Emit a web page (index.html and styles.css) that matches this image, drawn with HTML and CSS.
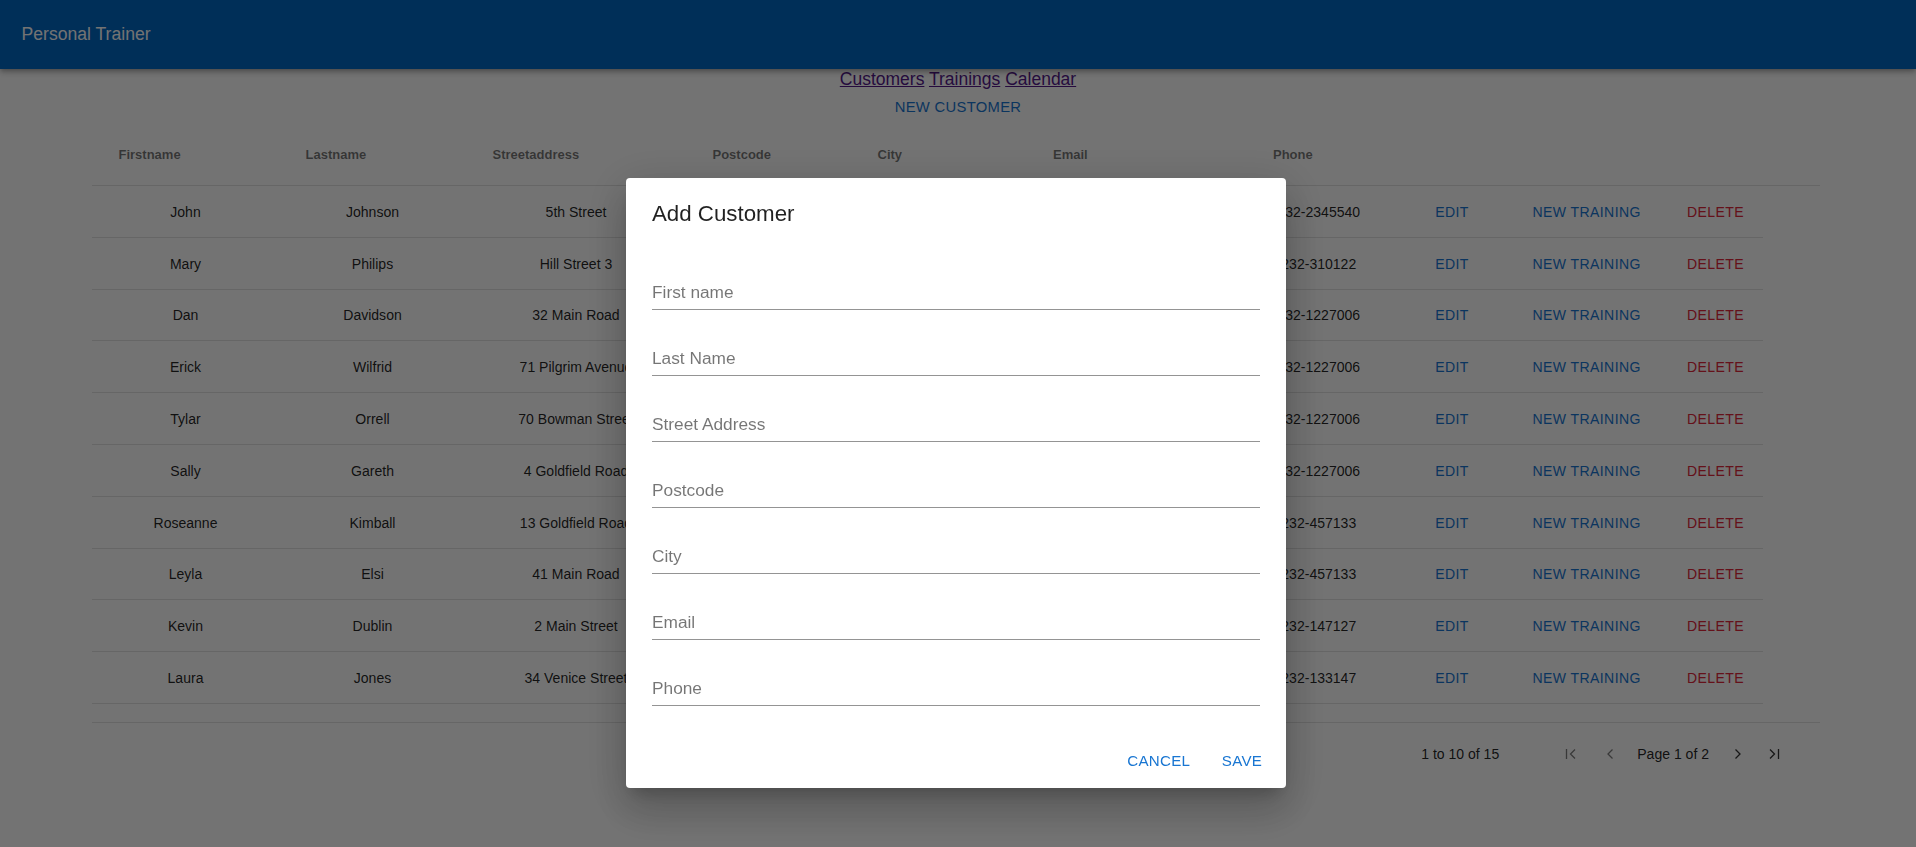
FILE: index.html
```html
<!DOCTYPE html>
<html lang="en">
<head>
<meta charset="utf-8">
<title>Personal Trainer</title>
<link rel="stylesheet" href="styles.css">
</head>
<body>
<header class="appbar">
  <div class="toolbar"><span class="brand">Personal Trainer</span></div>
</header>
<main class="main">
  <nav class="nav"><a class="link" href="#">Customers</a> <a class="link" href="#">Trainings</a> <a class="link" href="#">Calendar</a></nav>
  <div class="top-actions"><button class="btn btn-top">New Customer</button></div>
  <section class="grid">
    <div class="grid-header">
      <div class="hcell">Firstname</div>
      <div class="hcell">Lastname</div>
      <div class="hcell">Streetaddress</div>
      <div class="hcell">Postcode</div>
      <div class="hcell">City</div>
      <div class="hcell">Email</div>
      <div class="hcell">Phone</div>
      <div class="hcell"></div>
      <div class="hcell"></div>
      <div class="hcell"></div>
    </div>
    <div class="grid-body">
      <div class="row"><div class="cell">John</div><div class="cell">Johnson</div><div class="cell">5th Street</div><div class="cell">23110</div><div class="cell">Flintsone</div><div class="cell">john@mail.com</div><div class="cell">232-2345540</div><div class="acell"><button class="btn btn-sm btn-blue">Edit</button></div><div class="acell"><button class="btn btn-sm btn-blue">New Training</button></div><div class="acell"><button class="btn btn-sm btn-red">Delete</button></div></div>
      <div class="row"><div class="cell">Mary</div><div class="cell">Philips</div><div class="cell">Hill Street 3</div><div class="cell">23120</div><div class="cell">Flintsone</div><div class="cell">m.philips@mail.com</div><div class="cell">232-310122</div><div class="acell"><button class="btn btn-sm btn-blue">Edit</button></div><div class="acell"><button class="btn btn-sm btn-blue">New Training</button></div><div class="acell"><button class="btn btn-sm btn-red">Delete</button></div></div>
      <div class="row"><div class="cell">Dan</div><div class="cell">Davidson</div><div class="cell">32 Main Road</div><div class="cell">23122</div><div class="cell">Springfield</div><div class="cell">dan@mymail.com</div><div class="cell">232-1227006</div><div class="acell"><button class="btn btn-sm btn-blue">Edit</button></div><div class="acell"><button class="btn btn-sm btn-blue">New Training</button></div><div class="acell"><button class="btn btn-sm btn-red">Delete</button></div></div>
      <div class="row"><div class="cell">Erick</div><div class="cell">Wilfrid</div><div class="cell">71 Pilgrim Avenue</div><div class="cell">23110</div><div class="cell">Chevy Chase</div><div class="cell">erick@mail.com</div><div class="cell">232-1227006</div><div class="acell"><button class="btn btn-sm btn-blue">Edit</button></div><div class="acell"><button class="btn btn-sm btn-blue">New Training</button></div><div class="acell"><button class="btn btn-sm btn-red">Delete</button></div></div>
      <div class="row"><div class="cell">Tylar</div><div class="cell">Orrell</div><div class="cell">70 Bowman Street</div><div class="cell">23111</div><div class="cell">South Windsor</div><div class="cell">tylar@mail.com</div><div class="cell">232-1227006</div><div class="acell"><button class="btn btn-sm btn-blue">Edit</button></div><div class="acell"><button class="btn btn-sm btn-blue">New Training</button></div><div class="acell"><button class="btn btn-sm btn-red">Delete</button></div></div>
      <div class="row"><div class="cell">Sally</div><div class="cell">Gareth</div><div class="cell">4 Goldfield Road</div><div class="cell">23112</div><div class="cell">Honolulu</div><div class="cell">sally@mail.com</div><div class="cell">232-1227006</div><div class="acell"><button class="btn btn-sm btn-blue">Edit</button></div><div class="acell"><button class="btn btn-sm btn-blue">New Training</button></div><div class="acell"><button class="btn btn-sm btn-red">Delete</button></div></div>
      <div class="row"><div class="cell">Roseanne</div><div class="cell">Kimball</div><div class="cell">13 Goldfield Road</div><div class="cell">23113</div><div class="cell">Honolulu</div><div class="cell">roseanne@mail.com</div><div class="cell">232-457133</div><div class="acell"><button class="btn btn-sm btn-blue">Edit</button></div><div class="acell"><button class="btn btn-sm btn-blue">New Training</button></div><div class="acell"><button class="btn btn-sm btn-red">Delete</button></div></div>
      <div class="row"><div class="cell">Leyla</div><div class="cell">Elsi</div><div class="cell">41 Main Road</div><div class="cell">23114</div><div class="cell">Springfield</div><div class="cell">leyla@mail.com</div><div class="cell">232-457133</div><div class="acell"><button class="btn btn-sm btn-blue">Edit</button></div><div class="acell"><button class="btn btn-sm btn-blue">New Training</button></div><div class="acell"><button class="btn btn-sm btn-red">Delete</button></div></div>
      <div class="row"><div class="cell">Kevin</div><div class="cell">Dublin</div><div class="cell">2 Main Street</div><div class="cell">23115</div><div class="cell">Flintsone</div><div class="cell">kevin@mail.com</div><div class="cell">232-147127</div><div class="acell"><button class="btn btn-sm btn-blue">Edit</button></div><div class="acell"><button class="btn btn-sm btn-blue">New Training</button></div><div class="acell"><button class="btn btn-sm btn-red">Delete</button></div></div>
      <div class="row"><div class="cell">Laura</div><div class="cell">Jones</div><div class="cell">34 Venice Street</div><div class="cell">23116</div><div class="cell">Chevy Chase</div><div class="cell">laura@mail.com</div><div class="cell">232-133147</div><div class="acell"><button class="btn btn-sm btn-blue">Edit</button></div><div class="acell"><button class="btn btn-sm btn-blue">New Training</button></div><div class="acell"><button class="btn btn-sm btn-red">Delete</button></div></div>
    </div>
    <div class="paging">
      <span class="summary">1 to 10 of 15</span>
      <span class="pbtn pbtn-first disabled"><svg width="12" height="12" viewBox="0 0 12 12"><path d="M1.5 1v10" /><path d="M10 1.5 5.5 6 10 10.5" /></svg></span>
      <span class="pbtn pbtn-prev disabled"><svg width="12" height="12" viewBox="0 0 12 12"><path d="M8.5 1.5 4 6 8.5 10.5" /></svg></span>
      <span class="pdesc">Page 1 of 2</span>
      <span class="pbtn pbtn-next"><svg width="12" height="12" viewBox="0 0 12 12"><path d="M3.5 1.5 8 6 3.5 10.5" /></svg></span>
      <span class="pbtn pbtn-last"><svg width="12" height="12" viewBox="0 0 12 12"><path d="M2 1.5 6.5 6 2 10.5" /><path d="M10.5 1v10" /></svg></span>
    </div>
  </section>
</main>
<div class="backdrop"></div>
<div class="dialog" role="dialog" aria-labelledby="dlg-title">
  <h2 class="dialog-title" id="dlg-title">Add Customer</h2>
  <div class="dialog-content">
    <div class="field"><label class="field-label">First name</label></div>
    <div class="field"><label class="field-label">Last Name</label></div>
    <div class="field"><label class="field-label">Street Address</label></div>
    <div class="field"><label class="field-label">Postcode</label></div>
    <div class="field"><label class="field-label">City</label></div>
    <div class="field"><label class="field-label">Email</label></div>
    <div class="field"><label class="field-label">Phone</label></div>
  </div>
  <div class="dialog-actions">
    <button class="btn btn-dlg">Cancel</button>
    <button class="btn btn-dlg">Save</button>
  </div>
</div>
</body>
</html>
```
FILE: styles.css
```css
* { box-sizing: border-box; }

html, body {
  margin: 0;
  padding: 0;
  background: #ffffff;
  font-family: "Liberation Sans", Arial, Helvetica, sans-serif;
  color: rgba(0, 0, 0, 0.87);
}

body { min-height: 847px; }

.appbar {
  height: 69px;
  background: #0068c4;
  box-shadow: 0 2px 4px -1px rgba(0,0,0,0.2), 0 4px 5px 0 rgba(0,0,0,0.14), 0 1px 10px 0 rgba(0,0,0,0.12);
  position: relative;
  z-index: 1;
}

.toolbar {
  height: 69px;
  display: flex;
  align-items: center;
  padding-left: 21.5px;
}

.brand {
  font-size: 17.6px;
  color: #ffffff;
  line-height: 1;
}

.main {
  display: flex;
  flex-direction: column;
}

.nav {
  height: 17px;
  padding-top: 2px;
  box-sizing: content-box;
  line-height: 17px;
  font-size: 17.5px;
  text-align: center;
}

.link {
  color: #551a8b;
  text-decoration: underline;
}

.top-actions {
  margin-top: -1px;
  height: 39px;
  display: flex;
  justify-content: center;
}

.btn {
  font-family: "Liberation Sans", Arial, Helvetica, sans-serif;
  background: transparent;
  border: 0;
  text-transform: uppercase;
  cursor: pointer;
  display: inline-flex;
  align-items: center;
  justify-content: center;
  padding: 0;
}

.btn-top {
  height: 39px;
  min-width: 69px;
  padding: 0 8.6px;
  font-size: 14.8px;
  letter-spacing: 0.3px;
  color: #1976d2;
}

.grid {
  margin-left: 92px;
  width: 1728px;
  display: flex;
  flex-direction: column;
  font-size: 14.04px;
}

.grid-header,
.row {
  display: grid;
  grid-template-columns: 187px 187px 220px 165px 175.5px 220px 144.5px 109.7px 153.8px 108.5px;
}

.grid-header {
  height: 60px;
  border-bottom: 1px solid #e2e2e2;
  align-items: center;
  padding-bottom: 2px;
}

.hcell {
  padding-left: 26.5px;
  font-size: 13px;
  font-weight: 700;
  color: rgba(0, 0, 0, 0.54);
  white-space: nowrap;
}

.grid-body {
  height: 536px;
}

.row {
  width: 1671px;
  height: 51.8px;
  border-bottom: 1px solid #e2e2e2;
  align-items: center;
  padding-top: 1px;
}

.cell {
  padding: 0 26.5px;
  text-align: center;
  white-space: nowrap;
  color: rgba(0, 0, 0, 0.87);
}

.acell {
  padding-left: 26.5px;
  display: flex;
  align-items: center;
}

.btn-sm {
  min-width: 69px;
  height: 32px;
  padding: 0 5.4px;
  font-size: 14.04px;
  letter-spacing: 0.4px;
  white-space: nowrap;
}

.btn-blue { color: #1976d2; }
.btn-red { color: #e0263a; }

.paging {
  height: 62px;
  border-top: 1px solid #e2e2e2;
  display: flex;
  align-items: center;
  justify-content: flex-end;
  padding-right: 37px;
  color: rgba(0, 0, 0, 0.87);
  font-size: 14.04px;
}

.summary { margin-right: 63px; }

.pbtn {
  width: 18px;
  height: 18px;
  display: inline-flex;
  align-items: center;
  justify-content: center;
}

.pbtn svg {
  fill: none;
  stroke: rgba(0, 0, 0, 0.8);
  stroke-width: 1.3;
}

.pbtn.disabled svg { stroke: rgba(0, 0, 0, 0.5); }

.pbtn-prev { margin-left: 20.5px; }
.pdesc { margin-left: 18.5px; }
.pbtn-next { margin-left: 19.5px; }
.pbtn-last { margin-left: 18.5px; }

.backdrop {
  position: fixed;
  inset: 0;
  background: rgba(0, 0, 0, 0.55);
  z-index: 10;
}

.dialog {
  position: fixed;
  left: 626px;
  top: 178px;
  width: 660px;
  background: #ffffff;
  border-radius: 4px;
  z-index: 11;
  box-shadow: 0 11px 15px -7px rgba(0,0,0,0.2), 0 24px 38px 3px rgba(0,0,0,0.14), 0 9px 46px 8px rgba(0,0,0,0.12);
  display: flex;
  flex-direction: column;
}

.dialog-title {
  margin: 0;
  padding: 19.3px 26px 17.3px;
  font-size: 22.3px;
  line-height: 34.6px;
  font-weight: 400;
  color: rgba(0, 0, 0, 0.87);
}

.dialog-content {
  padding: 10.6px 26px 10.4px;
  display: flex;
  flex-direction: column;
}

.field {
  height: 50px;
  margin-bottom: 16px;
  border-bottom: 1px solid rgba(0, 0, 0, 0.42);
  display: flex;
  align-items: flex-end;
  padding-bottom: 7px;
}

.field-label {
  font-size: 17.3px;
  line-height: 20px;
  color: rgba(0, 0, 0, 0.54);
}

.dialog-actions {
  display: flex;
  justify-content: flex-end;
  padding: 8.6px 9.5px 8.6px 8.6px;
  gap: 8.6px;
}

.btn-dlg {
  height: 39px;
  min-width: 69px;
  padding: 0 8.6px;
  font-size: 15.12px;
  letter-spacing: 0.3px;
  color: #1976d2;
}
```
